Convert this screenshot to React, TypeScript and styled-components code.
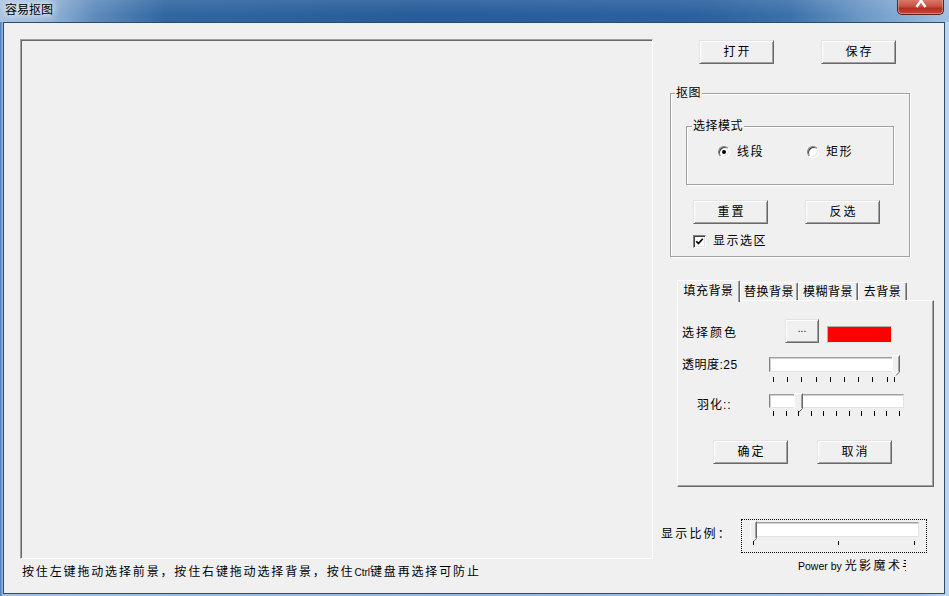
import React from "react";
import styled, { createGlobalStyle } from "styled-components";

const FONT = `"Liberation Sans", "Noto Sans CJK SC", sans-serif`;

const GlobalStyle = createGlobalStyle`
  html, body { margin: 0; padding: 0; }
  body { width: 949px; height: 596px; overflow: hidden; font-family: ${FONT}; background: #f0f0f0; }
  *, *::before, *::after { box-sizing: border-box; }
`;

const Window = styled.div`
  width: 949px;
  height: 596px;
  display: flex;
  flex-direction: column;
  background: linear-gradient(to right, #3f78b6 0, #7fa8d4 2px, #a3c2e3 3px, #94b8de 50%, #a2c5e8 97%, #bcd8f1 100%);
`;

const TitleBar = styled.div`
  height: 22px;
  flex: none;
  display: flex;
  align-items: flex-start;
  background:
    linear-gradient(to bottom, rgba(255, 255, 255, 0.1), rgba(255, 255, 255, 0) 70%),
    linear-gradient(to right, #a9c3df 0, #9bb8d9 45px, #5e8bbc 95px, #3066a1 165px, #265c99 420px, #2a619e 700px, #3b71aa 790px, #6a97c5 860px, #a0c1e3 949px);
`;

const TitleText = styled.span`
  margin: 2px 0 0 5px;
  font: 12px/14px "Noto Sans CJK SC", sans-serif;
  color: #000;
  text-shadow: 0 0 6px #fff, 0 0 10px rgba(255, 255, 255, 0.9);
`;

const CloseButton = styled.div`
  margin-left: auto;
  margin-right: 5px;
  width: 47px;
  height: 15px;
  display: flex;
  justify-content: center;
  align-items: flex-start;
  border: 1px solid #5a231a;
  border-top: none;
  border-radius: 0 0 5px 5px;
  background: linear-gradient(#d9786a, #c75242 45%, #b2301f 60%, #c4473a);
  box-shadow: inset 0 -1px 0 rgba(255, 255, 255, 0.35), inset 1px 0 rgba(255, 255, 255, 0.3),
    inset -1px 0 rgba(255, 255, 255, 0.3);
`;

const Client = styled.div`
  flex: 1;
  min-height: 0;
  margin: 0 4px 2px 3px;
  border: 1px solid #2f4a6b;
  background: #f0f0f0;
  display: flex;
`;

const LeftCol = styled.div`
  width: 649px;
  flex: none;
  padding: 16px 0 0 16px;
  display: flex;
  flex-direction: column;
`;

const Canvas = styled.div`
  width: 633px;
  height: 520px;
  border: 1px solid;
  border-color: #a0a0a0 #fff #fff #a0a0a0;
  box-shadow: inset 1px 1px 0 #696969;
  background: #f0f0f0;
`;

const StatusText = styled.div`
  margin-top: 6px;
  padding-left: 2px;
  font: 12px/14px ${FONT};
  letter-spacing: 1.85px;
  color: #000;
  white-space: nowrap;
`;

const Narrow = styled.span`
  font-size: 10px;
  letter-spacing: 0;
`;

const RightCol = styled.div`
  flex: 1;
  padding-top: 16px;
  display: flex;
  flex-direction: column;
  align-items: flex-start;
`;

const Row = styled.div<{ $mt?: number; $ml?: number; $gap?: number }>`
  display: flex;
  align-items: flex-start;
  margin-top: ${(p) => p.$mt ?? 0}px;
  margin-left: ${(p) => p.$ml ?? 0}px;
  gap: ${(p) => p.$gap ?? 0}px;
`;

const Button = styled.button<{ $w: number }>`
  width: ${(p) => p.$w}px;
  height: 24px;
  flex: none;
  margin: 0;
  padding: 0 0 0 2px;
  background: #f0f0f0;
  border: 1px solid;
  border-color: #e3e3e3 #696969 #696969 #e3e3e3;
  box-shadow: inset 1px 1px 0 #fff, inset -1px -1px 0 #a0a0a0;
  font: 12px/14px ${FONT};
  letter-spacing: 2px;
  color: #000;
`;

const GroupBox = styled.div<{ $w: number; $h: number; $mt: number; $ml: number }>`
  width: ${(p) => p.$w}px;
  height: ${(p) => p.$h}px;
  margin-top: ${(p) => p.$mt}px;
  margin-left: ${(p) => p.$ml}px;
  flex: none;
  border: 1px solid #a0a0a0;
  box-shadow: inset 1px 1px 0 #fff, 1px 1px 0 #fff;
  display: flex;
  flex-direction: column;
  align-items: flex-start;
`;

const GroupLabel = styled.span<{ $ml: number }>`
  margin: -8px 0 0 ${(p) => p.$ml}px;
  padding: 0 1px;
  background: #f0f0f0;
  font: 12px/14px ${FONT};
  letter-spacing: 0.5px;
  color: #000;
`;

const RadioRow = styled.div`
  margin-top: 12px;
  padding-left: 31px;
  display: grid;
  grid-template-columns: 89px auto;
`;

const Choice = styled.label`
  display: flex;
  align-items: center;
  gap: 7px;
  height: 14px;
  font: 12px/14px ${FONT};
  letter-spacing: 1.5px;
  color: #000;
`;

const RadioDot = styled.span<{ $checked?: boolean }>`
  width: 12px;
  height: 12px;
  flex: none;
  border-radius: 50%;
  border: 1px solid;
  border-color: #808080 #fff #fff #808080;
  box-shadow: inset 1px 1px 0 #404040, inset -1px -1px 0 #e3e3e3;
  background: #fff;
  display: flex;
  align-items: center;
  justify-content: center;
  &::after {
    content: "";
    width: 4px;
    height: 4px;
    border-radius: 50%;
    background: ${(p) => (p.$checked ? "#000" : "transparent")};
  }
`;

const CheckBox = styled.span`
  width: 13px;
  height: 13px;
  flex: none;
  background: #fff;
  border: 1px solid;
  border-color: #808080 #fff #fff #808080;
  box-shadow: inset 1px 1px 0 #404040, inset -1px -1px 0 #e3e3e3;
  display: flex;
  align-items: center;
  justify-content: center;
`;

const TabsWrap = styled.div`
  margin: 23px 0 0 24px;
  display: flex;
  flex-direction: column;
`;

const TabStrip = styled.div`
  height: 20px;
  display: flex;
  align-items: flex-end;
  position: relative;
  z-index: 1;
`;

const Tab = styled.div<{ $w: number; $active?: boolean }>`
  width: ${(p) => p.$w}px;
  height: ${(p) => (p.$active ? 22 : 18)}px;
  margin-bottom: ${(p) => (p.$active ? -2 : 0)}px;
  padding-bottom: ${(p) => (p.$active ? 2 : 0)}px;
  display: flex;
  align-items: center;
  justify-content: center;
  background: #f0f0f0;
  border-top: 1px solid #fff;
  border-left: 1px solid #fff;
  border-right: 1px solid #696969;
  box-shadow: inset -1px 0 0 #a0a0a0;
  border-radius: 2px 2px 0 0;
  font: 12px/14px ${FONT};
  letter-spacing: 0.5px;
  color: #000;
`;

const TabPanel = styled.div`
  width: 257px;
  height: 187px;
  border: 1px solid;
  border-color: #fff #696969 #696969 #fff;
  box-shadow: inset -1px -1px 0 #a0a0a0;
  padding: 18px 0 0 4px;
  display: flex;
  flex-direction: column;
  align-items: flex-start;
`;

const FieldLabel = styled.span<{ $w: number; $mt?: number; $mb?: number; $pl?: number; $ls?: number }>`
  width: ${(p) => p.$w}px;
  flex: none;
  margin-top: ${(p) => p.$mt ?? 0}px;
  margin-bottom: ${(p) => p.$mb ?? 0}px;
  padding-left: ${(p) => p.$pl ?? 0}px;
  font: 12px/14px ${FONT};
  letter-spacing: ${(p) => p.$ls ?? 1.5}px;
  color: #000;
  white-space: nowrap;
`;

const ColorRow = styled.div`
  display: flex;
  align-items: flex-end;
`;

const DotsButton = styled(Button)`
  font-size: 10px;
  letter-spacing: 0;
  padding: 0 0 4px 0;
`;

const Swatch = styled.span`
  width: 65px;
  height: 17px;
  margin-left: 8px;
  background: #ff0000;
  border: 1px solid;
  border-color: #b0b0b0 #e8e8e8 #e8e8e8 #b0b0b0;
`;

const SliderWrap = styled.div<{ $w: number }>`
  width: ${(p) => p.$w}px;
  flex: none;
  display: flex;
  flex-direction: column;
`;

const Track = styled.div<{ $h: number; $mt: number }>`
  position: relative;
  height: ${(p) => p.$h}px;
  margin-top: ${(p) => p.$mt}px;
  background: #fff;
  border: 1px solid;
  border-color: #a0a0a0 #e3e3e3 #e3e3e3 #808080;
  box-shadow: inset 1px 1px 0 #d0d0d0;
`;

const ThumbSvg = styled.svg`
  position: absolute;
  display: block;
`;

const TickRow = styled.div<{ $h: number; $mt: number }>`
  position: relative;
  height: ${(p) => p.$h}px;
  margin-top: ${(p) => p.$mt}px;
`;

const Tick = styled.span`
  position: absolute;
  top: 0;
  width: 1px;
  height: 100%;
  background: #000;
`;

const FocusBox = styled.div`
  width: 186px;
  height: 34px;
  border: 1px dotted #000;
  padding: 1px 0 0 8px;
  flex: none;
`;

const PowerLine = styled.div`
  margin: 6px 0 0 145px;
  width: 108px;
  overflow: hidden;
  white-space: nowrap;
  font: 12px/14px ${FONT};
  letter-spacing: 2.4px;
  color: #000;
`;

const PowerLatin = styled.span`
  font-size: 10.5px;
  letter-spacing: 0;
`;

type SliderProps = {
  width: number;
  trackH: number;
  trackMt: number;
  thumbLeft: number;
  thumbTop: number;
  thumbW: number;
  thumbH: number;
  ticks: number[];
  tickMt: number;
  tickH: number;
};

function Thumb({ w, h, left, top }: { w: number; h: number; left: number; top: number }) {
  const b = h - w / 2;
  return (
    <ThumbSvg width={w} height={h} viewBox={`0 0 ${w} ${h}`} style={{ left, top }}>
      <path d={`M0.5 0.5 H${w - 0.5} V${b} L${w / 2} ${h - 0.5} L0.5 ${b} Z`} fill="#f0f0f0" />
      <path d={`M${w / 2} ${h - 0.5} L0.5 ${b} V0.5 H${w - 1}`} fill="none" stroke="#fff" />
      <path d={`M${w - 0.5} 0.5 V${b} L${w / 2} ${h - 0.5}`} fill="none" stroke="#696969" />
      <path d={`M${w - 1.5} 1.5 V${b - 0.5}`} fill="none" stroke="#a0a0a0" />
    </ThumbSvg>
  );
}

function Slider(p: SliderProps) {
  return (
    <SliderWrap $w={p.width}>
      <Track $h={p.trackH} $mt={p.trackMt}>
        <Thumb w={p.thumbW} h={p.thumbH} left={p.thumbLeft} top={p.thumbTop} />
      </Track>
      <TickRow $h={p.tickH} $mt={p.tickMt}>
        {p.ticks.map((x, i) => (
          <Tick key={i} style={{ left: x }} />
        ))}
      </TickRow>
    </SliderWrap>
  );
}

const range = (n: number, start: number, step: number) =>
  Array.from({ length: n }, (_, i) => Math.round(start + i * step));

export default function App() {
  return (
    <>
      <GlobalStyle />
      <Window>
        <TitleBar>
          <TitleText>容易抠图</TitleText>
          <CloseButton>
            <svg width="14" height="8" viewBox="0 0 14 8">
              <path d="M3 -5 L11.5 7 M11 -5 L2.5 7" stroke="#fff" strokeWidth="2.4" />
            </svg>
          </CloseButton>
        </TitleBar>
        <Client>
          <LeftCol>
            <Canvas />
            <StatusText>
              按住左键拖动选择前景，按住右键拖动选择背景，按住<Narrow>Ctrl</Narrow>键盘再选择可防止
            </StatusText>
          </LeftCol>
          <RightCol>
            <Row $mt={1} $ml={46} $gap={47}>
              <Button $w={75}>打开</Button>
              <Button $w={75}>保存</Button>
            </Row>

            <GroupBox $w={240} $h={164} $mt={29} $ml={17}>
              <GroupLabel $ml={4}>抠图</GroupLabel>
              <GroupBox $w={208} $h={59} $mt={26} $ml={15}>
                <GroupLabel $ml={5}>选择模式</GroupLabel>
                <RadioRow>
                  <Choice>
                    <RadioDot $checked />
                    线段
                  </Choice>
                  <Choice>
                    <RadioDot />
                    矩形
                  </Choice>
                </RadioRow>
              </GroupBox>
              <Row $mt={15} $ml={22} $gap={37}>
                <Button $w={75}>重置</Button>
                <Button $w={75}>反选</Button>
              </Row>
              <Row $mt={10} $ml={22}>
                <Choice>
                  <CheckBox>
                    <svg width="9" height="9" viewBox="0 0 9 9">
                      <path d="M1.2 4.2 L3.4 6.6 L7.8 1.8" fill="none" stroke="#000" strokeWidth="1.7" />
                    </svg>
                  </CheckBox>
                  显示选区
                </Choice>
              </Row>
            </GroupBox>

            <TabsWrap>
              <TabStrip>
                <Tab $w={63} $active>
                  填充背景
                </Tab>
                <Tab $w={58}>替换背景</Tab>
                <Tab $w={60}>模糊背景</Tab>
                <Tab $w={49}>去背景</Tab>
              </TabStrip>
              <TabPanel>
                <ColorRow>
                  <FieldLabel $w={103} $mb={3} $ls={2}>
                    选择颜色
                  </FieldLabel>
                  <DotsButton $w={34}>...</DotsButton>
                  <Swatch />
                </ColorRow>
                <Row $mt={13}>
                  <FieldLabel $w={87} $mt={2} $ls={0.5}>
                    透明度:25
                  </FieldLabel>
                  <Slider
                    width={131}
                    trackH={15}
                    trackMt={1}
                    thumbLeft={122}
                    thumbTop={-3}
                    thumbW={8}
                    thumbH={21}
                    ticks={[...range(9, 4, 14.2), 125]}
                    tickMt={5}
                    tickH={5}
                  />
                </Row>
                <Row $mt={10}>
                  <FieldLabel $w={87} $mt={6} $pl={15} $ls={1}>
                    羽化::
                  </FieldLabel>
                  <Slider
                    width={135}
                    trackH={14}
                    trackMt={2}
                    thumbLeft={24}
                    thumbTop={-2}
                    thumbW={9}
                    thumbH={20}
                    ticks={range(11, 4, 12.6)}
                    tickMt={3}
                    tickH={5}
                  />
                </Row>
                <Row $mt={24} $ml={31} $gap={29}>
                  <Button $w={75}>确定</Button>
                  <Button $w={75}>取消</Button>
                </Row>
              </TabPanel>
            </TabsWrap>

            <Row $mt={32} $ml={8}>
              <FieldLabel $w={80} $mt={8} $ls={2.2}>
                显示比例：
              </FieldLabel>
              <FocusBox>
                <Slider
                  width={169}
                  trackH={15}
                  trackMt={1}
                  thumbLeft={-1}
                  thumbTop={-2}
                  thumbW={7}
                  thumbH={21}
                  ticks={[3, 88, 164]}
                  tickMt={4}
                  tickH={4}
                />
              </FocusBox>
            </Row>

            <PowerLine>
              <PowerLatin>Power by </PowerLatin>光影魔术手
            </PowerLine>
          </RightCol>
        </Client>
      </Window>
    </>
  );
}
